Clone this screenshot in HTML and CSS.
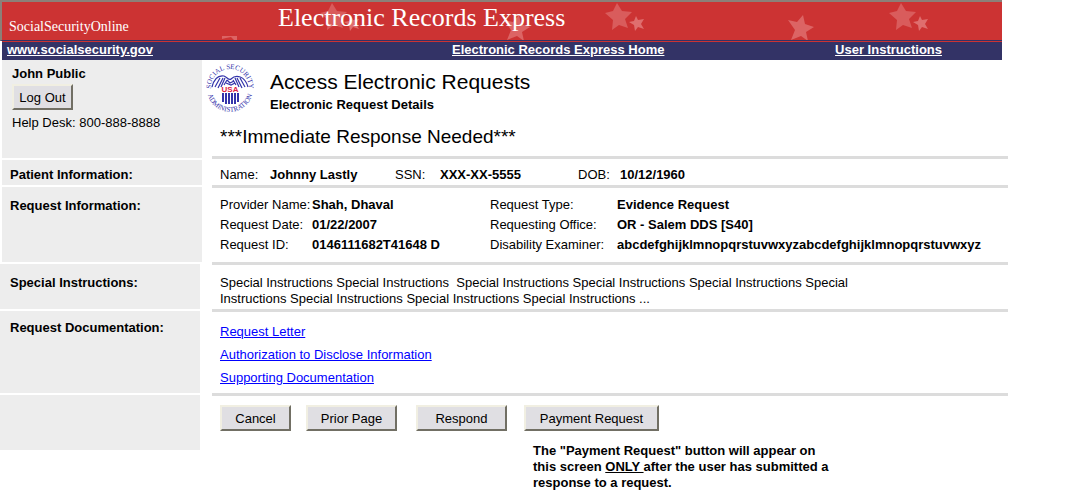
FILE: index.html
```html
<!DOCTYPE html>
<html lang="en">
<head>
    <meta charset="UTF-8">
    <meta name="viewport" content="width=device-width, initial-scale=1.0">
    <title>Electronic Records Express - Access Electronic Requests</title>
    <link rel="stylesheet" href="styles.css">
</head>
<body>
    <header>
        <div class="banner">
            <svg class="stars" width="1000" height="38" viewBox="2 2 1000 38" aria-hidden="true">
                <defs>
                    <path id="star-big" fill="#d95c5c" d="M-1-13 L4-5 L14-4 L7 3 L10 12 L1 9 L-6 14 L-5 4 L-13-3 L-5-5 Z"/>
                    <path id="star-small" fill="#df6e6e" d="M-1-7 L1-3 L7-4 L4 1 L7 6 L1 4 L-2 8 L-3 2 L-8-1 L-3-2 Z"/>
                    <path id="star-tilt" fill="#dc6464" d="M2-13 L4-4 L13-1 L5 4 L7 13 L0 8 L-10 12 L-6 2 L-13-8 L-4-6 Z"/>
                </defs>
                <path fill="#dc6464" d="M222 36 H237 V40 H234 L231 37 L226 38 L222 39 Z"/>
                <use href="#star-big" x="333" y="16"/>
                <use href="#star-small" x="352" y="23"/>
                <use href="#star-tilt" x="517" y="28"/>
                <use href="#star-big" x="618" y="16"/>
                <use href="#star-small" x="637" y="23"/>
                <use href="#star-tilt" x="801" y="28"/>
                <use href="#star-big" x="902" y="16"/>
                <use href="#star-small" x="921" y="23"/>
            </svg>
            <div class="brand">SocialSecurityOnline</div>
            <div class="banner-title">Electronic Records Express</div>
        </div>
        <nav class="topnav">
            <a href="#">www.socialsecurity.gov</a>
            <a href="#">Electronic Records Express Home</a>
            <a href="#">User Instructions</a>
        </nav>
    </header>

    <main>
        <section class="row intro">
            <div class="side">
                <strong>John Public</strong>
                <button type="button" class="logout">Log Out</button>
                <span>Help Desk: 800-888-8888</span>
            </div>
            <div class="content">
                <div class="heading">
                    <svg class="seal" width="48" height="48" viewBox="0 0 48 48" role="img" aria-label="Social Security Administration">
                        <defs>
                            <path id="arc-top" d="M6 30 A19 19 0 1 1 42 30"/>
                            <path id="arc-bottom" d="M2 18 A23 23 0 1 0 46 18"/>
                        </defs>
                        <text class="seal-text"><textPath href="#arc-top" startOffset="50%">SOCIAL SECURITY</textPath></text>
                        <text class="seal-text"><textPath href="#arc-bottom" startOffset="50%">ADMINISTRATION</textPath></text>
                        <g fill="none" stroke="#3333aa" stroke-width="1.2">
                            <path d="M6 23 C8 15 12 11 18 12 C21 13 23 17 25 15 C30 10 39 12 42 23"/>
                            <path d="M9 23 L14 14 M12 24 L17 14 M15 23 L19 14 M18 21 L21 16 M39 23 L34 14 M36 24 L31 14 M33 23 L29 14 M30 21 L27 16"/>
                            <path d="M21 16 L24 19 L28 17 M20 19 L25 21 L29 19"/>
                        </g>
                        <path class="seal-bars" d="M17 29 V38 M20 29 V40 M23 29 V40 M26 29 V40 M29 29 V40 M32 29 V38"/>
                        <text class="seal-usa" x="24" y="28">USA</text>
                    </svg>
                    <div>
                        <h1>Access Electronic Requests</h1>
                        <h2>Electronic Request Details</h2>
                    </div>
                </div>
                <p class="alert">***Immediate Response Needed***</p>
            </div>
        </section>

        <section class="row patient">
            <h3 class="side">Patient Information:</h3>
            <dl class="content">
                <dt>Name:</dt><dd>Johnny Lastly</dd>
                <dt>SSN:</dt><dd>XXX-XX-5555</dd>
                <dt>DOB:</dt><dd>10/12/1960</dd>
            </dl>
        </section>

        <section class="row request">
            <h3 class="side">Request Information:</h3>
            <dl class="content">
                <dt>Provider Name:</dt><dd>Shah, Dhaval</dd>
                <dt>Request Type:</dt><dd>Evidence Request</dd>
                <dt>Request Date:</dt><dd>01/22/2007</dd>
                <dt>Requesting Office:</dt><dd>OR - Salem DDS [S40]</dd>
                <dt>Request ID:</dt><dd>0146111682T41648 D</dd>
                <dt>Disability Examiner:</dt><dd>abcdefghijklmnopqrstuvwxyzabcdefghijklmnopqrstuvwxyz</dd>
            </dl>
        </section>

        <section class="row special">
            <h3 class="side">Special Instructions:</h3>
            <div class="content">
                <p>Special Instructions Special Instructions&nbsp; Special Instructions Special Instructions Special Instructions Special Instructions Special Instructions Special Instructions Special Instructions ...</p>
            </div>
        </section>

        <section class="row documents">
            <h3 class="side">Request Documentation:</h3>
            <ul class="content">
                <li><a href="#">Request Letter</a></li>
                <li><a href="#">Authorization to Disclose Information</a></li>
                <li><a href="#">Supporting Documentation</a></li>
            </ul>
        </section>

        <section class="row actions">
            <div class="side"></div>
            <div class="content">
                <div class="buttons">
                    <button type="button" class="cancel">Cancel</button>
                    <button type="button" class="prior">Prior Page</button>
                    <button type="button" class="respond">Respond</button>
                    <button type="button" class="payment">Payment Request</button>
                </div>
                <p class="note">The "Payment Request" button will appear on this screen <u>ONLY </u>after the user has submitted a response to a request.</p>
            </div>
        </section>
    </main>
</body>
</html>
```
FILE: styles.css
```css
* {
    box-sizing: border-box;
}
body {
    margin: 0;
    padding-right: 60px;
    background-color: #fff;
    color: #000;
    font-family: "Liberation Sans", Arial, sans-serif;
    font-size: 13px;
    line-height: 16px;
}
h1, h2, h3, p, dl, dd, ul {
    margin: 0;
    padding: 0;
}
h3 {
    font-size: 13px;
}

/* header */
header {
    margin-right: 6px;
}
.banner {
    position: relative;
    display: flex;
    height: 41px;
    overflow: hidden;
    background-color: #cc3333;
    border-top: 2px solid #8c7f78;
    border-left: 2px solid #8c7f78;
    border-bottom: 1px solid #333366;
    color: #fff;
    font-family: "Liberation Serif", "Times New Roman", serif;
}
.stars {
    position: absolute;
    top: 0;
    left: 0;
}
.brand {
    position: relative;
    width: 276px;
    padding: 17px 0 0 7px;
    font-size: 14px;
}
.banner-title {
    position: relative;
    font-size: 26px;
    line-height: 32px;
}
.topnav {
    display: grid;
    grid-template-columns: 445px 1fr auto;
    margin-left: 2px;
    padding: 0 60px 2px 5px;
    background-color: #333366;
    border-top: 1px solid #cc3333;
}
.topnav a {
    justify-self: start;
    color: #fff;
    font-weight: bold;
}

/* rows: grey label column and content */
.row {
    display: grid;
    grid-template-columns: 200px 1fr;
    column-gap: 12px;
}
.side {
    padding-left: 10px;
    background-color: #ededed;
    border-bottom: 2px solid #fff;
}
.content {
    margin-bottom: -1px;
    padding-left: 8px;
    border-bottom: 3px solid #dcdcdc;
}
button {
    height: 26px;
    padding: 0;
    background-color: #e0dfe3;
    border: 2px solid;
    border-color: #f1efe2 #716f64 #716f64 #f1efe2;
    color: #000;
    font-family: inherit;
    font-size: 13px;
}

/* the upper rows sit flush with the nav bar */
.intro .side, .patient .side, .request .side {
    margin-left: 2px;
    margin-right: -2px;
    padding-left: 8px;
}
.intro .side {
    display: flex;
    flex-direction: column;
    align-items: flex-start;
    gap: 2px;
    padding: 6px 0 0 10px;
}
.intro .content {
    margin-bottom: 1px;
    padding: 4px 0 7px 0;
}
.logout {
    width: 61px;
    margin-bottom: 3px;
}
.heading {
    display: flex;
    gap: 16px;
    margin-left: -6px;
}
.heading h1 {
    padding-top: 6px;
    font-size: 21px;
    font-weight: normal;
    line-height: 24px;
}
.heading h2 {
    padding-top: 3px;
    font-size: 13px;
}
.alert {
    padding: 11px 0 0 8px;
    font-size: 19px;
    line-height: 25px;
}
.seal-text {
    fill: #3333aa;
    font-family: "Liberation Serif", serif;
    font-size: 7px;
    text-anchor: middle;
}
.seal-usa {
    fill: #dd2244;
    font-family: "Liberation Sans", Arial, sans-serif;
    font-size: 8px;
    font-weight: bold;
    text-anchor: middle;
}
.seal-bars {
    stroke: #3333aa;
    stroke-width: 2;
}

.patient .side {
    padding-top: 7px;
    padding-bottom: 2px;
}
.patient .content {
    display: grid;
    grid-template-columns: 50px 125px 45px 138px 42px 1fr;
    padding-top: 7px;
}

.request .side {
    padding-top: 11px;
}
.request .content {
    display: grid;
    grid-template-columns: 92px 178px 127px 1fr;
    row-gap: 4px;
    padding-top: 10px;
    padding-bottom: 9px;
}
dd {
    font-weight: bold;
}

.special .side, .special .content {
    padding-top: 11px;
}
.special .content {
    padding-bottom: 2px;
}
.special p {
    max-width: 650px;
}

.documents .side {
    padding-top: 9px;
}
.documents .content {
    display: grid;
    row-gap: 7px;
    padding-top: 13px;
    padding-bottom: 7px;
    list-style: none;
}
.documents a {
    color: #0000ff;
}

.actions .side {
    height: 55px;
    border: 0;
}
.actions .content {
    padding-top: 10px;
    border: 0;
}
.buttons {
    display: flex;
    flex-wrap: wrap;
    align-items: center;
}
.cancel {
    width: 71px;
    margin-right: 15px;
}
.prior {
    width: 91px;
    margin-right: 19px;
}
.respond {
    width: 91px;
    margin-right: 17px;
}
.payment {
    width: 135px;
}
.note {
    max-width: 620px;
    padding: 12px 0 0 313px;
    font-weight: bold;
}
```
